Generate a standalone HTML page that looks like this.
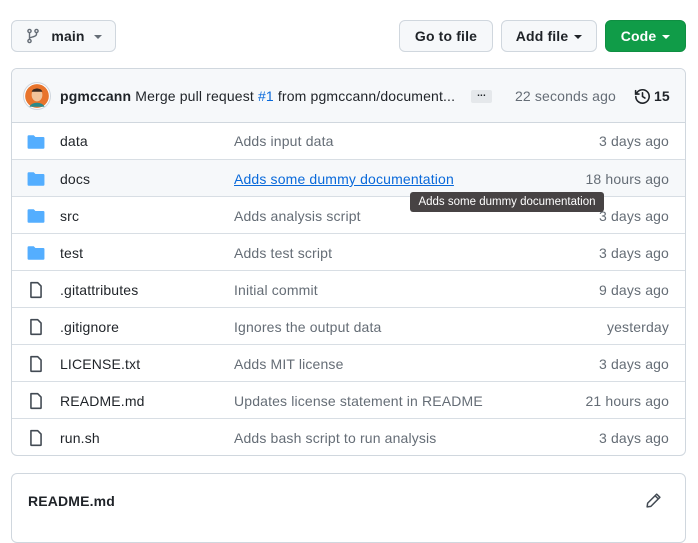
<!DOCTYPE html><html><head><style>
*{box-sizing:border-box;margin:0;padding:0}
body{width:698px;height:522px;overflow:hidden;background:#fff;font-family:"Liberation Sans",Arial,sans-serif;font-size:14px;color:#1f2328;position:relative;letter-spacing:0.15px}
.btn{position:absolute;top:20px;height:32px;border:1px solid #d0d7de;border-radius:6px;background:#f6f8fa;font-weight:bold;font-size:14px;display:flex;align-items:center;justify-content:center}
.caret{display:inline-block;width:0;height:0;border-left:4px solid transparent;border-right:4px solid transparent;border-top:4px solid currentColor;margin-left:6px;margin-top:2px}
.box{position:absolute;left:11px;top:68px;width:675px;height:388px;border:1px solid #d0d7de;border-radius:6px;overflow:hidden}
.hdr{height:54px;background:#f6f8fa;border-bottom:1px solid #d0d7de;position:relative}
.row{height:37px;border-top:1px solid #d8dee4;position:relative}
.row.first{border-top:none;height:36px}
.row span{position:absolute;top:11px}
.first span{top:10px}
.n{left:48px}.m{left:222px;color:#656d76}.t{right:16px;color:#656d76}
.ic{position:absolute;left:15px;top:10px}
</style></head><body>
<div class="btn" style="left:11px;width:105px"><svg width="16" height="16" viewBox="0 0 16 16" style="margin-right:10px"><g fill="none" stroke="#656d76" stroke-width="1.4"><circle cx="4.5" cy="3" r="1.6"/><circle cx="4.5" cy="13" r="1.6"/><circle cx="11.5" cy="3" r="1.6"/><path d="M4.5 4.6v6.8M11.5 4.6v1.4c0 2-2 2.5-7 3.8"/></g></svg>main<span class="caret" style="margin-left:9px;color:#656d76"></span></div>
<div class="btn" style="left:399px;width:94px">Go to file</div>
<div class="btn" style="left:501px;width:96px">Add file<span class="caret"></span></div>
<div class="btn" style="left:605px;width:81px;background:#109c48;border-color:#0f8f42;color:#fff">Code<span class="caret"></span></div>
<div class="box">
<div class="hdr">
<svg style="position:absolute;left:11px;top:13px" width="28" height="28" viewBox="0 0 26 26"><circle cx="13" cy="13" r="12.5" fill="#fff" stroke="#d0d7de"/><circle cx="13" cy="13" r="11" fill="#e8742c"/><ellipse cx="13" cy="12" rx="5" ry="6" fill="#f2c49a"/><path d="M6 23c2-5 12-5 14 0" fill="#2a8a8a"/><path d="M8 9c1-4 9-4 10 0" fill="#3a2a20"/></svg>
<span style="position:absolute;left:48px;top:19px;white-space:nowrap"><b>pgmccann</b> Merge pull request <span style="color:#0969da">#1</span> from pgmccann/document...</span>
<span style="position:absolute;left:459px;top:21px;width:21px;height:13px;background:#e5e8eb;border-radius:2px;font-size:10px;font-weight:bold;text-align:center;line-height:8px">...</span>
<span style="position:absolute;left:503px;top:19px;color:#656d76">22 seconds ago</span>
<svg style="position:absolute;left:622px;top:19px" width="17" height="17" viewBox="0 0 16 16"><g fill="none" stroke="#1f2328" stroke-width="1.5" stroke-linecap="round"><path d="M2.2 5.5A6.3 6.3 0 1 1 1.7 8"/><path d="M1.5 2.5v3.2h3.2"/><path d="M8 4.5V8l2.3 1.5"/></g></svg>
<b style="position:absolute;left:642px;top:19px">15</b>
</div>
<div>
<div class="row first"><svg class="ic" width="18" height="18" viewBox="0 0 16 16"><path d="M.5 3a1 1 0 0 1 1-1h4.5l1.5 1.5h7a1 1 0 0 1 1 1V13a1 1 0 0 1-1 1h-13a1 1 0 0 1-1-1z" fill="#54aeff"/></svg><span class="n">data</span><span class="m">Adds input data</span><span class="t">3 days ago</span></div>
<div class="row" style="background:#f6f8fa"><svg class="ic" width="18" height="18" viewBox="0 0 16 16"><path d="M.5 3a1 1 0 0 1 1-1h4.5l1.5 1.5h7a1 1 0 0 1 1 1V13a1 1 0 0 1-1 1h-13a1 1 0 0 1-1-1z" fill="#54aeff"/></svg><span class="n">docs</span><span class="m" style="color:#0969da;text-decoration:underline">Adds some dummy documentation</span><span class="t">18 hours ago</span></div>
<div class="row"><svg class="ic" width="18" height="18" viewBox="0 0 16 16"><path d="M.5 3a1 1 0 0 1 1-1h4.5l1.5 1.5h7a1 1 0 0 1 1 1V13a1 1 0 0 1-1 1h-13a1 1 0 0 1-1-1z" fill="#54aeff"/></svg><span class="n">src</span><span class="m">Adds analysis script</span><span class="t">3 days ago</span></div>
<div class="row"><svg class="ic" width="18" height="18" viewBox="0 0 16 16"><path d="M.5 3a1 1 0 0 1 1-1h4.5l1.5 1.5h7a1 1 0 0 1 1 1V13a1 1 0 0 1-1 1h-13a1 1 0 0 1-1-1z" fill="#54aeff"/></svg><span class="n">test</span><span class="m">Adds test script</span><span class="t">3 days ago</span></div>
<div class="row"><svg class="ic" width="18" height="18" viewBox="0 0 16 16"><path d="M3.5 1.5h6l3 3v9.5a.5.5 0 0 1-.5.5H4a.5.5 0 0 1-.5-.5z" fill="none" stroke="#424a53" stroke-width="1.4" stroke-linejoin="round"/></svg><span class="n">.gitattributes</span><span class="m">Initial commit</span><span class="t">9 days ago</span></div>
<div class="row"><svg class="ic" width="18" height="18" viewBox="0 0 16 16"><path d="M3.5 1.5h6l3 3v9.5a.5.5 0 0 1-.5.5H4a.5.5 0 0 1-.5-.5z" fill="none" stroke="#424a53" stroke-width="1.4" stroke-linejoin="round"/></svg><span class="n">.gitignore</span><span class="m">Ignores the output data</span><span class="t">yesterday</span></div>
<div class="row"><svg class="ic" width="18" height="18" viewBox="0 0 16 16"><path d="M3.5 1.5h6l3 3v9.5a.5.5 0 0 1-.5.5H4a.5.5 0 0 1-.5-.5z" fill="none" stroke="#424a53" stroke-width="1.4" stroke-linejoin="round"/></svg><span class="n">LICENSE.txt</span><span class="m">Adds MIT license</span><span class="t">3 days ago</span></div>
<div class="row"><svg class="ic" width="18" height="18" viewBox="0 0 16 16"><path d="M3.5 1.5h6l3 3v9.5a.5.5 0 0 1-.5.5H4a.5.5 0 0 1-.5-.5z" fill="none" stroke="#424a53" stroke-width="1.4" stroke-linejoin="round"/></svg><span class="n">README.md</span><span class="m">Updates license statement in README</span><span class="t">21 hours ago</span></div>
<div class="row"><svg class="ic" width="18" height="18" viewBox="0 0 16 16"><path d="M3.5 1.5h6l3 3v9.5a.5.5 0 0 1-.5.5H4a.5.5 0 0 1-.5-.5z" fill="none" stroke="#424a53" stroke-width="1.4" stroke-linejoin="round"/></svg><span class="n">run.sh</span><span class="m">Adds bash script to run analysis</span><span class="t">3 days ago</span></div>
</div></div>
<div style="position:absolute;left:410px;top:192px;width:194px;height:20px;background:#474344;color:#fff;font-size:11.5px;letter-spacing:0;line-height:20px;text-align:center;border-radius:3px;white-space:nowrap">Adds some dummy documentation</div>
<div style="position:absolute;left:11px;top:473px;width:675px;height:70px;border:1px solid #d0d7de;border-radius:6px">
<b style="position:absolute;left:16px;top:19px">README.md</b>
<svg style="position:absolute;left:633px;top:18px" width="17" height="17" viewBox="0 0 16 16"><path d="M11 2l3 3-8.5 8.5L2 14l.5-3.5z M9.5 3.5l3 3" fill="none" stroke="#424a53" stroke-width="1.4" stroke-linejoin="round"/></svg>
</div>
</body></html>
